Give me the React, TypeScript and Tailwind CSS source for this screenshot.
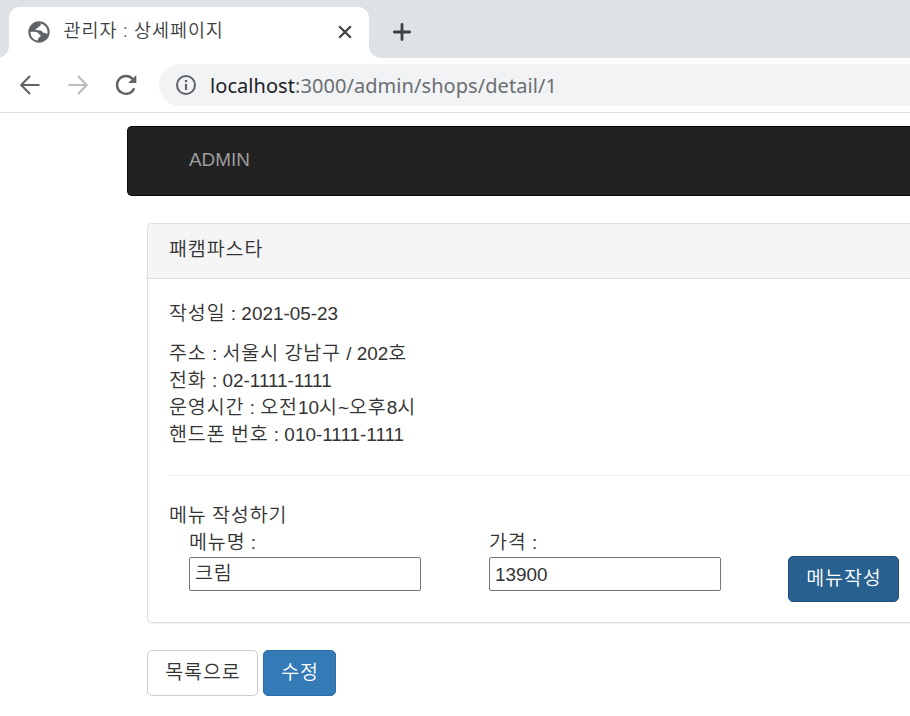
import React from 'react';

const HANGUL = /([\uac00-\ud7a3]+)/;

function Ko({ text, track = 'text-[19.5px] tracking-[0.93px] leading-none' }: { text: string; track?: string }) {
  return (
    <>
      {text.split(HANGUL).map((part, i) =>
        HANGUL.test(part) ? (
          <span key={i} className={track}>{part}</span>
        ) : (
          <React.Fragment key={i}>{part}</React.Fragment>
        ),
      )}
    </>
  );
}

function GlobeIcon() {
  return (
    <svg viewBox="0 0 22 22" className="h-[22px] w-[22px] shrink-0">
      <circle cx="11" cy="11" r="10.7" fill="#5f6368" />
      <path
        d="M2.5 10.9 C5 10.6 8.2 10.6 9.6 11.6 C10.8 12.4 10.6 13.6 12.4 13.8 C13 15.4 12.2 16.4 10.4 16.8 C10 17.6 10.4 18.6 9.8 19.5 C5.4 19 2.3 15.2 2.5 10.9Z"
        fill="#fff"
      />
      <path
        d="M12.4 2.4 C13.6 4.2 12.4 5.4 10.4 5.4 C10.4 7 9.4 7.4 7.8 7.6 C7.2 8.8 8.2 9.5 10 9.3 C12.6 9 14.6 9.8 14.8 11.8 C16.8 11.4 18.4 12.2 19.2 13.6 C20.8 8.6 17.4 3.2 12.4 2.4Z"
        fill="#fff"
      />
    </svg>
  );
}

function TabStrip() {
  return (
    <div className="flex h-[58px] items-end bg-[#dee1e6]">
      <div className="h-3 w-[9px] overflow-hidden bg-white">
        <div className="-ml-[3px] h-3 w-3 rounded-br-[12px] bg-[#dee1e6]" />
      </div>
      <div className="flex h-[51px] w-[360px] items-center rounded-t-[11px] bg-white pb-[2px] pl-[19px] pr-[17px]">
        <GlobeIcon />
        <span className="relative -top-[2px] ml-[13.5px] whitespace-pre font-['Noto_Sans','Noto_Sans_CJK_KR',sans-serif] text-[18.5px] font-[350] leading-6 tracking-[0.8px] text-[#3c4043]">
          <Ko text="관리자 : 상세페이지" track="tracking-[0.95px]" />
        </span>
        <svg viewBox="0 0 14 14" className="ml-auto h-[14px] w-[14px]" stroke="#3c4043" strokeWidth="2.2">
          <path d="M1.2 1.2 12.8 12.8M12.8 1.2 1.2 12.8" />
        </svg>
      </div>
      <div className="h-3 w-3 bg-white">
        <div className="h-3 w-3 rounded-bl-[12px] bg-[#dee1e6]" />
      </div>
      <svg viewBox="0 0 18 18" className="mb-[17px] ml-3 h-[18px] w-[18px]" stroke="#3c4043" strokeWidth="2.8" strokeLinecap="round">
        <path d="M9 1.4V16.6M1.4 9H16.6" />
      </svg>
    </div>
  );
}

function Toolbar() {
  return (
    <div className="flex h-[55px] items-center border-b border-[#dadce0] bg-white pl-5">
      <svg viewBox="0 0 20 20" className="-mt-px h-5 w-5" fill="none" stroke="#5f6368" strokeWidth="2.2">
        <path d="M19.5 10H2M10 1 1.2 10 10 19" />
      </svg>
      <svg viewBox="0 0 20 20" className="-mt-px ml-7 h-5 w-5" fill="none" stroke="#babcbe" strokeWidth="2.2">
        <path d="M0.5 10H18M10 1 18.8 10 10 19" />
      </svg>
      <svg viewBox="0 0 22 22" className="-mt-px ml-[27px] h-[22px] w-[22px]" fill="none" stroke="#5f6368" strokeWidth="2.4">
        <path d="M19.2 14.2A8.9 8.9 0 1 1 17.6 5" />
        <path d="M21.3 1V9H13.2Z" fill="#5f6368" stroke="none" />
      </svg>
      <div className="ml-[22px] flex h-[42px] grow items-center rounded-l-full bg-[#f1f3f4] pl-[17px]">
        <svg viewBox="0 0 20 20" className="h-5 w-5" fill="none" stroke="#5f6368" strokeWidth="2">
          <circle cx="10" cy="10" r="9" />
          <path d="M10 9V15M10 5V7.2" strokeWidth="2.2" />
        </svg>
        <span className="ml-[14px] mt-px whitespace-nowrap font-['Noto_Sans',sans-serif] text-[20px] font-normal leading-6 tracking-[0.06px] text-[#6b6e72]">
          <span className="text-[#202124]">localhost</span>:3000/admin/shops/detail/1
        </span>
      </div>
    </div>
  );
}

function Field({ label, value }: { label: string; value: string }) {
  return (
    <label className="flex w-[300px] flex-col">
      <span><Ko text={label} /></span>
      <span className="mt-px flex h-[34px] w-[232px] items-center whitespace-pre rounded-[2px] border border-[#767676] bg-white pl-[5px]">
        <Ko text={value} />
      </span>
    </label>
  );
}

export default function App() {
  return (
    <div className="h-[716px] w-[910px] overflow-hidden bg-white font-['Liberation_Sans','Noto_Sans_CJK_KR',sans-serif] text-[18.9px] font-[350] leading-[27px] text-[#333]">
      <TabStrip />
      <Toolbar />
      <main className="flex flex-col pt-[13px]">
        <nav className="ml-[127px] flex h-[70px] items-center rounded-l-[5px] border border-r-0 border-[#080808] bg-[#222] pb-[3px] pl-[61px] text-[#9d9d9d]">
          ADMIN
        </nav>
        <section className="ml-[147px] mt-[27px] h-[400px] rounded-l-[5px] border border-r-0 border-[#ddd] bg-white shadow-[0_1px_1px_rgba(0,0,0,0.05)]">
          <h1 className="h-[55px] rounded-tl-[4px] border-b border-[#ddd] bg-[#f5f5f5] pl-[21px] pt-[12px]">
            <Ko text="패캠파스타" />
          </h1>
          <div className="whitespace-pre pl-[21px] pt-[21px]">
            <p><Ko text="작성일 : 2021-05-23" /></p>
            <div className="mt-[13px]">
              <p><Ko text="주소 : 서울시 강남구 / 202호" /></p>
              <p><Ko text="전화 : 02-1111-1111" /></p>
              <p><Ko text="운영시간 : 오전10시~오후8시" /></p>
              <p><Ko text="핸드폰 번호 : 010-1111-1111" /></p>
            </div>
            <hr className="mb-[26px] mt-[27px] border-[#eee]" />
            <p><Ko text="메뉴 작성하기" /></p>
            <form className="flex pl-5">
              <Field label="메뉴명 :" value="크림" />
              <Field label="가격 :" value="13900" />
              <button type="button" className="-ml-px mt-[27px] h-[46px] w-[111px] rounded-[5px] border border-[#204d74] bg-[#286090] pb-[2px] pl-px text-white">
                <Ko text="메뉴작성" />
              </button>
            </form>
          </div>
        </section>
        <div className="ml-[147px] mt-[27px] flex gap-[5px]">
          <button type="button" className="h-[46px] w-[111px] rounded-[5px] border border-[#ccc] bg-white pb-px pl-px">
            <Ko text="목록으로" />
          </button>
          <button type="button" className="h-[46px] w-[73px] rounded-[5px] border border-[#2e6da4] bg-[#337ab7] pb-px pl-px text-white">
            <Ko text="수정" />
          </button>
        </div>
      </main>
    </div>
  );
}
